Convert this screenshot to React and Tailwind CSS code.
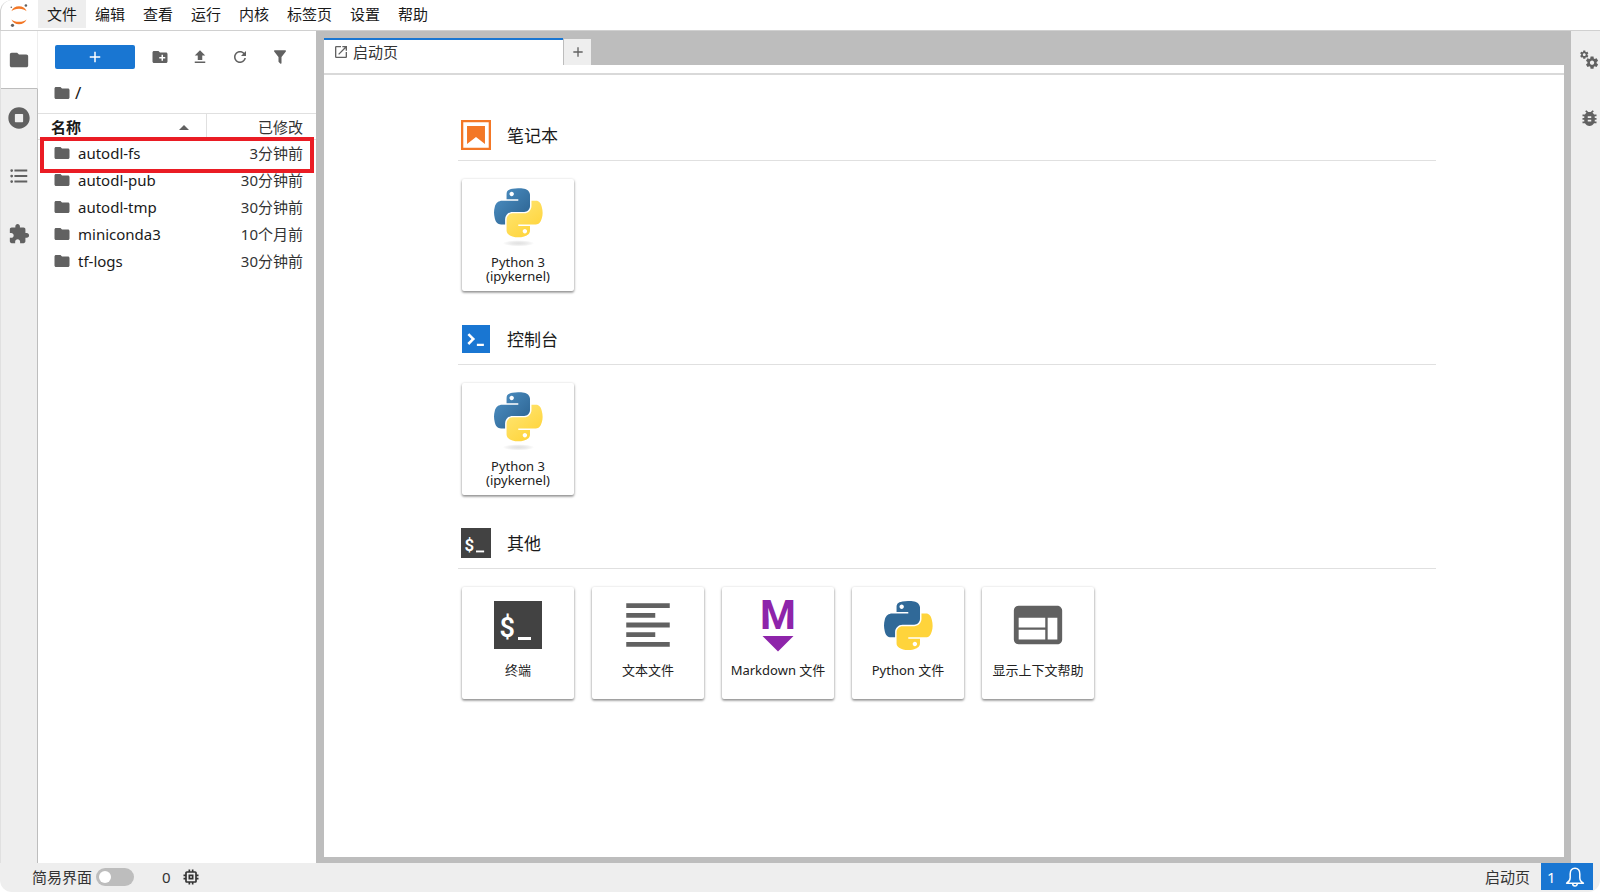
import React, { useState } from 'react';

const icons = {
  folder:
    'M10 4H4c-1.1 0-1.99.9-1.99 2L2 18c0 1.1.9 2 2 2h16c1.1 0 2-.9 2-2V8c0-1.1-.9-2-2-2h-8l-2-2z',
  newFolder:
    'M20 6h-8l-2-2H4c-1.11 0-1.99.89-1.99 2L2 18c0 1.11.89 2 2 2h16c1.11 0 2-.89 2-2V8c0-1.11-.89-2-2-2zm-1 8h-3v3h-2v-3h-3v-2h3V9h2v3h3v2z',
  upload: 'M9 16h6v-6h4l-7-7-7 7h4zm-4 2h14v2H5z',
  filter:
    'M14,12V19.88C14.04,20.18 13.94,20.5 13.71,20.71C13.32,21.1 12.69,21.1 12.3,20.71L10.29,18.7C10.06,18.47 9.96,18.16 10,17.87V12H9.97L4.21,4.62C3.87,4.19 3.95,3.56 4.38,3.22C4.57,3.08 4.78,3 5,3H19C19.22,3 19.43,3.08 19.62,3.22C20.05,3.56 20.13,4.19 19.79,4.62L14.03,12H14Z',
  add: 'M19 13h-6v6h-2v-6H5v-2h6V5h2v6h6v2z',
  toc: 'M7,5H21V7H7V5M7,13V11H21V13H7M4,4.5A1.5,1.5 0 0,1 5.5,6A1.5,1.5 0 0,1 4,7.5A1.5,1.5 0 0,1 2.5,6A1.5,1.5 0 0,1 4,4.5M4,10.5A1.5,1.5 0 0,1 5.5,12A1.5,1.5 0 0,1 4,13.5A1.5,1.5 0 0,1 2.5,12A1.5,1.5 0 0,1 4,10.5M7,19V17H21V19H7M4,16.5A1.5,1.5 0 0,1 5.5,18A1.5,1.5 0 0,1 4,19.5A1.5,1.5 0 0,1 2.5,18A1.5,1.5 0 0,1 4,16.5Z',
  extension:
    'M20.5 11H19V7c0-1.1-.9-2-2-2h-4V3.5C13 2.12 11.88 1 10.5 1S8 2.12 8 3.5V5H4c-1.1 0-1.99.9-1.99 2v3.8H3.5c1.49 0 2.7 1.21 2.7 2.7s-1.21 2.7-2.7 2.7H2V20c0 1.1.9 2 2 2h3.8v-1.5c0-1.49 1.21-2.7 2.7-2.7 1.49 0 2.7 1.21 2.7 2.7V22H17c1.1 0 2-.9 2-2v-4h1.5c1.38 0 2.5-1.12 2.5-2.5S21.88 11 20.5 11z',
  launcher:
    'M19 19H5V5h7V3H5a2 2 0 00-2 2v14a2 2 0 002 2h14c1.1 0 2-.9 2-2v-7h-2v7zM14 3v2h3.59l-9.83 9.83 1.41 1.41L19 6.41V10h2V3h-7z',
  text: 'M15 15H3v2h12v-2zm0-8H3v2h12V7zM3 13h18v-2H3v2zm0 8h18v-2H3v2zM3 3v2h18V3H3z',
  inspector:
    'M20 4H4c-1.1 0-1.99.9-1.99 2L2 18c0 1.1.9 2 2 2h16c1.1 0 2-.9 2-2V6c0-1.1-.9-2-2-2zm-5 14H4v-4h11v4zm0-5H4V9h11v4zm5 5h-4V9h4v9z',
  bug: 'M20 8h-2.81c-.45-.78-1.07-1.45-1.82-1.96L17 4.41 15.59 3l-2.17 2.17C12.96 5.06 12.49 5 12 5c-.49 0-.96.06-1.41.17L8.41 3 7 4.41l1.62 1.63C7.88 6.55 7.26 7.22 6.81 8H4v2h2.09c-.05.33-.09.66-.09 1v1H4v2h2v1c0 .34.04.67.09 1H4v2h2.81c1.04 1.79 2.97 3 5.19 3s4.15-1.21 5.19-3H20v-2h-2.09c.05-.33.09-.66.09-1v-1h2v-2h-2v-1c0-.34-.04-.67-.09-1H20V8zm-6 8h-4v-2h4v2zm0-4h-4v-2h4v2z',
  chip: 'M15 9H9v6h6V9zm-2 4h-2v-2h2v2zm8-2V9h-2V7c0-1.1-.9-2-2-2h-2V3h-2v2h-2V3H9v2H7c-1.1 0-2 .9-2 2v2H3v2h2v2H3v2h2v2c0 1.1.9 2 2 2h2v2h2v-2h2v2h2v-2h2c1.1 0 2-.9 2-2v-2h2v-2h-2v-2h2zm-4 6H7V7h10v10z',
};

const gear =
  'M14.9 17.45C16.25 17.45 17.35 16.35 17.35 15C17.35 13.65 16.25 12.55 14.9 12.55C13.54 12.55 12.45 13.65 12.45 15C12.45 16.35 13.54 17.45 14.9 17.45ZM20.1 15.68L21.58 16.84C21.71 16.95 21.75 17.13 21.66 17.29L20.26 19.71C20.17 19.86 20 19.92 19.83 19.86L18.09 19.16C17.73 19.44 17.33 19.67 16.91 19.85L16.64 21.7C16.62 21.87 16.47 22 16.3 22H13.5C13.32 22 13.18 21.87 13.15 21.7L12.89 19.85C12.46 19.67 12.07 19.44 11.71 19.16L9.96 19.86C9.81 19.92 9.62 19.86 9.54 19.71L8.14 17.29C8.05 17.13 8.09 16.95 8.22 16.84L9.7 15.68L9.65 15L9.7 14.31L8.22 13.16C8.09 13.05 8.05 12.86 8.14 12.71L9.54 10.29C9.62 10.13 9.81 10.07 9.96 10.13L11.71 10.84C12.07 10.56 12.46 10.32 12.89 10.15L13.15 8.29C13.18 8.13 13.32 8 13.5 8H16.3C16.47 8 16.62 8.13 16.64 8.29L16.91 10.15C17.33 10.32 17.73 10.56 18.09 10.84L19.83 10.13C20 10.07 20.17 10.13 20.26 10.29L21.66 12.71C21.75 12.86 21.71 13.05 21.58 13.16L20.1 14.31L20.15 15L20.1 15.68Z';

const snakeTop =
  'M54.92 0C50.34.02 45.96.41 42.11 1.09C30.76 3.1 28.7 7.29 28.7 15.03V25.25H55.51V28.66H18.64C10.85 28.66 4.02 33.34 1.89 42.25C-.57 52.46-.68 58.84 1.89 69.5C3.79 77.44 8.35 83.09 16.14 83.09H25.36V70.84C25.36 61.99 33.01 54.19 42.11 54.19H68.89C76.34 54.19 82.29 48.05 82.29 40.56V15.03C82.29 7.77 76.16 2.31 68.89 1.09C64.28.33 59.5-.02 54.92 0ZM40.42 8.22C43.19 8.22 45.45 10.52 45.45 13.34C45.45 16.16 43.19 18.44 40.42 18.44C37.64 18.44 35.39 16.16 35.39 13.34C35.39 10.52 37.64 8.22 40.42 8.22Z';
const snakeBottom =
  'M85.64 28.66V40.56C85.64 49.79 77.81 57.56 68.89 57.56H42.11C34.77 57.56 28.7 63.84 28.7 71.19V96.72C28.7 103.99 35.02 108.26 42.11 110.34C50.59 112.84 58.73 113.29 68.89 110.34C75.64 108.39 82.29 104.46 82.29 96.72V86.5H55.51V83.09H95.7C103.49 83.09 106.4 77.66 109.11 69.5C111.91 61.1 111.79 53.03 109.11 42.25C107.18 34.49 103.5 28.66 95.7 28.66H85.64ZM70.58 93.31C73.35 93.31 75.61 95.59 75.61 98.41C75.61 101.23 73.35 103.53 70.58 103.53C67.8 103.53 65.54 101.23 65.54 98.41C65.54 95.59 67.8 93.31 70.58 93.31Z';

const Icon = ({ name, className }) => (
  <svg viewBox="0 0 24 24" fill="currentColor" className={className} aria-hidden="true">
    <path d={icons[name]} />
  </svg>
);

const JupyterLogo = () => (
  <svg viewBox="0 0 24 24" className="h-6 w-6" aria-hidden="true">
    <g fill="#f37726">
      <path d="M4.4 8.2C5.6 5.200 8.500 3.300 12 3.300s6.400 1.900 7.600 4.900C17.900 6.700 15.200 5.800 12 5.800S6.100 6.700 4.400 8.200z" />
      <path d="M4.400 16.400C5.600 19.400 8.500 21.300 12 21.300s6.400-1.900 7.600-4.900C17.900 17.900 15.200 18.800 12 18.800s-5.900-.9-7.600-2.400z" />
    </g>
    <g fill="#616161">
      <circle cx="18.900" cy="2.500" r="1.300" />
      <circle cx="4.300" cy="4.200" r="0.800" />
      <circle cx="5.500" cy="22.300" r="1.600" />
    </g>
  </svg>
);

const RefreshIcon = () => (
  <svg viewBox="0 0 18 18" fill="currentColor" className="h-[18px] w-[18px]" aria-hidden="true">
    <path d="M9 13.5c-2.490 0-4.500-2.010-4.500-4.500S6.510 4.500 9 4.500c1.240 0 2.360.52 3.170 1.330L10 8h5V3l-1.760 1.760C12.150 3.680 10.660 3 9 3 5.690 3 3.010 5.690 3.010 9S5.690 15 9 15c2.970 0 5.430-2.160 5.900-5h-1.520c-.46 2-2.240 3.500-4.380 3.500z" />
  </svg>
);

const RunningIcon = () => (
  <svg viewBox="0 0 512 512" fill="currentColor" className="h-[22px] w-[22px]" aria-hidden="true">
    <path d="M256 8C119 8 8 119 8 256s111 248 248 248 248-111 248-248S393 8 256 8zm96 328c0 8.800-7.200 16-16 16H176c-8.800 0-16-7.200-16-16V176c0-8.800 7.200-16 16-16h160c8.800 0 16 7.200 16 16v160z" />
  </svg>
);

const GearsIcon = () => (
  <svg viewBox="0 0 24 24" fill="currentColor" className="h-[22px] w-[22px]" aria-hidden="true">
    <path fillRule="evenodd" d={gear} />
    <path fillRule="evenodd" transform="translate(-4.100 -4.300) scale(0.680)" d={gear} />
  </svg>
);

const BellIcon = () => (
  <svg viewBox="0 0 20 20" fill="none" stroke="currentColor" strokeWidth="1.500" className="h-5 w-5" aria-hidden="true">
    <path strokeLinejoin="round" d="M10 1.200C6.700 1.200 5.200 3.800 5.200 7v3.800c0 2.600-1 3.900-3.600 5.400h16.800c-2.600-1.500-3.600-2.800-3.600-5.400V7c0-3.200-1.500-5.800-4.800-5.800z" />
    <path d="M7.600 16.200a2.400 2.800 0 0 0 4.800 0" />
  </svg>
);

const NotebookIcon = () => (
  <svg viewBox="1.800 1.800 18.400 18.400" fill="#f37726" className="h-[30px] w-[30px]" aria-hidden="true">
    <path d="M18.800 3.200v15.600H3.200V3.200h15.600m1.400-1.400H1.800v18.400h18.400z" />
    <path d="M16.500 16.500l-5.500-4.300-5.500 4.300v-11h11z" />
  </svg>
);

const ConsoleIcon = () => (
  <svg viewBox="20 20 160 160" className="h-7 w-7" aria-hidden="true">
    <path fill="#1976d2" d="M20 20h160v160H20z" />
    <path
      fill="#fff"
      d="M105 127.300h40v12.800h-40zM51.100 77L74 99.900l-23.300 23.300 10.500 10.500 23.300-23.300L95 99.900 84.500 89.400 61.600 66.500z"
    />
  </svg>
);

const TerminalIcon = ({ className }) => (
  <svg viewBox="0 0 48 48" className={className} aria-hidden="true">
    <rect width="48" height="48" fill="#424242" />
    <text x="5.500" y="36" fontSize="27" fontWeight="600" fill="#fff" className="font-[Roboto,sans-serif]">
      $
    </text>
    <rect x="24" y="36" width="13" height="3" fill="#fff" />
  </svg>
);

const MarkdownIcon = () => (
  <svg viewBox="0 0 48 76" className="h-[76px] w-12" aria-hidden="true">
    <text
      x="24"
      y="42"
      fontSize="41"
      fontWeight="700"
      textAnchor="middle"
      fill="#8e24aa"
      className="font-[Roboto,sans-serif]"
    >
      M
    </text>
    <path fill="#8e24aa" d="M8.500 49h31L24 64.500z" />
  </svg>
);

const PythonIcon = () => (
  <svg viewBox="0 0 112 112" className="h-[49px] w-[49px]" aria-hidden="true">
    <path fill="#306998" d={snakeTop} />
    <path fill="#ffd43b" d={snakeBottom} />
  </svg>
);

const KernelIcon = () => (
  <svg viewBox="0 0 112 134" className="h-[59px] w-[49px]" aria-hidden="true">
    <defs>
      <linearGradient id="kernel-blue" x1="0" y1="0" x2="1" y2="1">
        <stop offset="0" stopColor="#4f92c6" />
        <stop offset="0.800" stopColor="#306998" />
      </linearGradient>
      <linearGradient id="kernel-yellow" x1="0.800" y1="0.900" x2="0.300" y2="0.200">
        <stop offset="0" stopColor="#ffd43b" />
        <stop offset="1" stopColor="#ffe267" />
      </linearGradient>
      <radialGradient id="kernel-shade">
        <stop offset="0" stopColor="#b8b8b8" stopOpacity="0.400" />
        <stop offset="1" stopColor="#7f7f7f" stopOpacity="0" />
      </radialGradient>
    </defs>
    <ellipse cx="56" cy="126" rx="36" ry="7" fill="url(#kernel-shade)" />
    <path fill="url(#kernel-blue)" d={snakeTop} />
    <path fill="url(#kernel-yellow)" d={snakeBottom} />
  </svg>
);

const menus = ['文件', '编辑', '查看', '运行', '内核', '标签页', '设置', '帮助'];

const files = [
  { name: 'autodl-fs', modified: '3分钟前', marked: true },
  { name: 'autodl-pub', modified: '30分钟前' },
  { name: 'autodl-tmp', modified: '30分钟前' },
  { name: 'miniconda3', modified: '10个月前' },
  { name: 'tf-logs', modified: '30分钟前' },
];

const sections = [
  {
    title: '笔记本',
    icon: <NotebookIcon />,
    cards: [{ label: 'Python 3 (ipykernel)', icon: <KernelIcon /> }],
  },
  {
    title: '控制台',
    icon: <ConsoleIcon />,
    cards: [{ label: 'Python 3 (ipykernel)', icon: <KernelIcon /> }],
  },
  {
    title: '其他',
    icon: <TerminalIcon className="h-[30px] w-[30px]" />,
    cards: [
      { label: '终端', icon: <TerminalIcon className="h-12 w-12" /> },
      { label: '文本文件', icon: <Icon name="text" className="h-[58px] w-[58px] text-[#616161]" /> },
      { label: 'Markdown 文件', icon: <MarkdownIcon /> },
      { label: 'Python 文件', icon: <PythonIcon /> },
      { label: '显示上下文帮助', icon: <Icon name="inspector" className="h-[58px] w-[58px] text-[#616161]" /> },
    ],
  },
];

const MenuBar = () => (
  <header className="flex h-[31px] shrink-0 items-stretch rounded-tl-xl border-b border-l border-[#d0d0d0] bg-white">
    <div className="flex w-[37px] items-center justify-center pr-0.5 pb-px">
      <JupyterLogo />
    </div>
    <nav className="flex pb-0.5">
      {menus.map((menu, i) => (
        <button key={menu} className={`px-[9px] ${i === 0 ? 'bg-[#eeeeee]' : 'hover:bg-[#eeeeee]'}`}>
          {menu}
        </button>
      ))}
    </nav>
  </header>
);

const ActivityBar = () => {
  const [active, setActive] = useState('files');
  const tabs = [
    { id: 'files', title: '文件浏览器', icon: <Icon name="folder" className="h-[22px] w-[22px]" /> },
    { id: 'running', title: '运行中的终端和内核', icon: <RunningIcon /> },
    { id: 'toc', title: '目录', icon: <Icon name="toc" className="h-[22px] w-[22px]" /> },
    { id: 'extensions', title: '扩展', icon: <Icon name="extension" className="h-[22px] w-[22px]" /> },
  ];

  return (
    <aside className="flex w-[38px] shrink-0 flex-col border-l border-[#e0e0e0] bg-[#eeeeee] text-[#616161]">
      {tabs.map((tab) => (
        <button
          key={tab.id}
          aria-label={tab.title}
          onClick={() => setActive(tab.id)}
          className={`flex h-[58px] items-center justify-center border-r pr-px ${
            active === tab.id ? 'border-r-[#eeeeee] border-b border-b-[#bdbdbd] bg-white' : 'border-[#bdbdbd]'
          }`}
        >
          {tab.icon}
        </button>
      ))}
      <div className="flex-1 border-r border-[#bdbdbd]" />
    </aside>
  );
};

const FileBrowser = () => (
  <section className="flex w-[278px] shrink-0 flex-col bg-white">
    <div className="flex items-center pt-[14px] pl-[17px] text-[#616161]">
      <button aria-label="新建启动页" className="flex h-6 w-20 items-center justify-center rounded-xs bg-[#1976d2] text-white">
        <Icon name="add" className="h-[18px] w-[18px]" />
      </button>
      <div className="flex pl-[5px]">
        <button aria-label="新建文件夹" className="flex w-10 justify-center">
          <Icon name="newFolder" className="h-[18px] w-[18px]" />
        </button>
        <button aria-label="上传文件" className="flex w-10 justify-center">
          <Icon name="upload" className="h-[18px] w-[18px]" />
        </button>
        <button aria-label="刷新文件列表" className="flex w-10 justify-center">
          <RefreshIcon />
        </button>
        <button aria-label="筛选文件" className="flex w-10 justify-center">
          <Icon name="filter" className="h-[18px] w-[18px]" />
        </button>
      </div>
    </div>

    {/* Breadcrumb */}
    <div className="flex h-11 items-center gap-1 pt-1 pl-[15px]">
      <Icon name="folder" className="h-[18px] w-[18px] text-[#616161]" />
      <span className="text-[17px]">/</span>
    </div>

    <table className="w-full table-fixed border-t border-[#e0e0e0]">
      <thead>
        <tr className="h-[26px] border-b border-[#e0e0e0]">
          <th className="p-0 pl-[13px] text-left font-bold">
            <div className="flex items-center justify-between pr-[17px]">
              名称
              <svg viewBox="0 0 10 6" className="h-[6px] w-[10px]" aria-hidden="true">
                <path fill="#616161" d="M0 6l5-5 5 5z" />
              </svg>
            </div>
          </th>
          <th className="w-[110px] border-l border-[#e0e0e0] p-0 pr-[13px] text-right font-normal text-[#333]">已修改</th>
        </tr>
      </thead>
      <tbody>
        {files.map((file) => (
          <tr key={file.name} className="relative h-[27px]">
            <td className="p-0 pl-[15px]">
              <div className="flex items-center gap-[7px]">
                <Icon name="folder" className="h-[18px] w-[18px] text-[#616161]" />
                {file.name}
              </div>
              {file.marked && (
                <div className="pointer-events-none absolute -top-[3px] right-0.5 -bottom-[6px] left-[2px] border-4 border-[#ea1c24]" />
              )}
            </td>
            <td className="p-0 pr-[13px] text-right text-[#333]">{file.modified}</td>
          </tr>
        ))}
      </tbody>
    </table>
  </section>
);

const LauncherCard = ({ label, icon }) => (
  <button className="flex h-28 w-28 flex-col items-center rounded-xs bg-white shadow-[0_1px_3px_rgba(0,0,0,0.4),0_2px_2px_rgba(0,0,0,0.16)]">
    <span className="flex h-[76px] shrink-0 items-center justify-center">{icon}</span>
    <span className="px-1 text-[13px] leading-[14px] text-[#212121]">{label}</span>
  </button>
);

const Launcher = () => (
  <div className="flex flex-1 flex-col gap-[33px] overflow-auto border-t-2 border-[#d9d9d9] bg-white pt-[45px] pr-32 pl-[134px]">
    {sections.map((section) => (
      <section key={section.title}>
        <div className="flex items-center gap-4 border-b border-[#e0e0e0] pb-[10px] pl-[3px]">
          <span className="flex h-[30px] w-[30px] items-center justify-center">{section.icon}</span>
          <h2 className="pt-0.5 text-[17px] leading-7">{section.title}</h2>
        </div>
        <div className="flex flex-wrap gap-[18px] pt-[18px] pl-1">
          {section.cards.map((card) => (
            <LauncherCard key={card.label} label={card.label} icon={card.icon} />
          ))}
        </div>
      </section>
    ))}
  </div>
);

const MainArea = () => (
  <main className="flex min-w-0 flex-1 flex-col bg-[#bdbdbd] pt-[7px] pr-[7px] pb-[6px] pl-2">
    <div className="flex items-end">
      <div className="flex h-[27px] w-[239px] items-center gap-1 border-t-2 border-[#1976d2] bg-white pb-0.5 pl-[9px]">
        <Icon name="launcher" className="h-4 w-4 text-[#616161]" />
        <span className="text-[#333]">启动页</span>
      </div>
      <button
        aria-label="新建标签页"
        className="flex h-[26px] w-7 items-center justify-center border-l border-[#bdbdbd] bg-[#eeeeee] text-[#616161]"
      >
        <Icon name="add" className="h-4 w-4" />
      </button>
    </div>
    <div className="h-2 bg-white" />
    <Launcher />
  </main>
);

const StatusBar = () => {
  const [simple, setSimple] = useState(false);

  return (
    <footer className="flex h-[29px] shrink-0 items-center justify-between rounded-b-xl bg-[#eeeeee] pr-[7px] pl-8 text-[#333]">
      <div className="flex items-center pb-0.5">
        <label className="flex cursor-pointer items-center gap-1">
          简易界面
          <input
            type="checkbox"
            role="switch"
            checked={simple}
            onChange={() => setSimple(!simple)}
            className="peer sr-only"
          />
          <span className="flex h-[18px] w-[38px] items-center rounded-full bg-[#bdbdbd] px-[3px] peer-checked:justify-end peer-checked:bg-[#1976d2]">
            <span className="h-3 w-3 rounded-full bg-white" />
          </span>
        </label>
        <div className="flex items-center gap-[10px] pl-7">
          0
          <Icon name="chip" className="h-5 w-5" />
        </div>
      </div>
      <div className="flex h-full items-center gap-[11px] pb-0.5">
        <span>启动页</span>
        <button
          aria-label="通知"
          className="flex h-[27px] w-[52px] items-center justify-between bg-[#1976d2] pr-2 pl-[6px] text-white"
        >
          1
          <BellIcon />
        </button>
      </div>
    </footer>
  );
};

const App = () => {
  return (
    <div className="flex h-screen flex-col overflow-hidden bg-white pb-0.5 font-['Noto_Sans','Noto_Sans_CJK_SC',sans-serif] text-[15px] leading-5 text-[#1a1a1a]">
      <MenuBar />
      <div className="flex min-h-0 flex-1">
        <ActivityBar />
        <FileBrowser />
        <MainArea />
        <aside className="flex w-[29px] shrink-0 flex-col bg-[#eeeeee] pl-2 text-[#616161]">
          <button aria-label="属性检查器" className="flex h-[58px] items-center">
            <GearsIcon />
          </button>
          <button aria-label="调试器" className="flex h-[58px] items-center">
            <Icon name="bug" className="h-[22px] w-[22px]" />
          </button>
        </aside>
      </div>
      <StatusBar />
    </div>
  );
};

export default App;
